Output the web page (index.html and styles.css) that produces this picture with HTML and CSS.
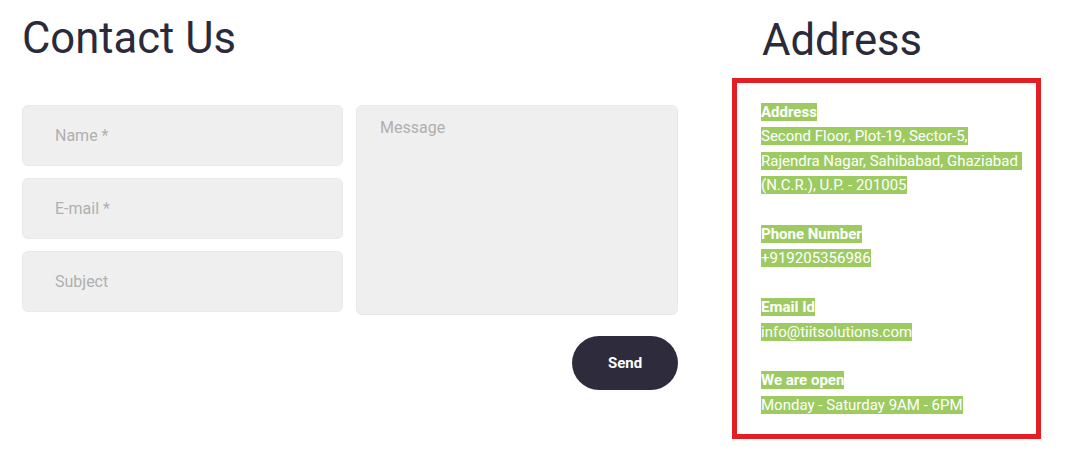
FILE: index.html
```html
<!DOCTYPE html>
<html lang="en">
<head>
  <meta charset="UTF-8" />
  <meta name="viewport" content="width=device-width, initial-scale=1.0" />
  <title>Contact Us</title>
  <link rel="stylesheet" href="styles.css">
</head>
<body>
  <div class="page">
    <section class="contact">
      <h1>Contact Us</h1>
      <form class="contact-form" onsubmit="return false">
        <div class="fields">
          <input type="text" placeholder="Name *" />
          <input type="email" placeholder="E-mail *" />
          <input type="text" placeholder="Subject" />
        </div>
        <textarea placeholder="Message"></textarea>
        <div class="actions">
          <button type="submit">Send</button>
        </div>
      </form>
    </section>

    <aside class="address">
      <h2>Address</h2>
      <div class="address-box">
        <p><span class="hl"><b>Address</b></span><br>
          <span class="hl">Second Floor, Plot-19, Sector-5,</span><br>
          <span class="hl">Rajendra Nagar, Sahibabad, Ghaziabad&nbsp;</span><br>
          <span class="hl">(N.C.R.), U.P. - 201005</span></p>
        <p><span class="hl"><b>Phone Number</b></span><br>
          <span class="hl">+919205356986</span></p>
        <p><span class="hl"><b>Email Id</b></span><br>
          <span class="hl">info@tiitsolutions.com</span></p>
        <p><span class="hl"><b>We are open</b></span><br>
          <span class="hl">Monday - Saturday 9AM - 6PM</span></p>
      </div>
    </aside>
  </div>
</body>
</html>
```

FILE: styles.css
```css
body {
  margin: 0;
  background: #fff;
  color: #2b2a3a;
  font-family: Roboto, 'Liberation Sans', sans-serif;
}
.page {
  display: flex;
  gap: 54px;
  padding: 0 22px;
}
.contact {
  width: 656px;
}
h1, h2 {
  font-weight: 400;
  font-size: 43.6px;
  line-height: 52px;
  margin: 13px 0 0;
  color: #2b2a3a;
}
h2 {
  margin: 15px 0 0 30px;
}
.contact-form {
  margin-top: 40px;
  display: grid;
  grid-template-columns: 321px 322px;
  column-gap: 13px;
}
.fields {
  display: flex;
  flex-direction: column;
  gap: 12px;
}
input, textarea {
  box-sizing: border-box;
  background: #efefef;
  border: 1px solid #e9e9e9;
  border-radius: 6px;
  font-family: Roboto, 'Liberation Sans', sans-serif;
  font-size: 16px;
  color: #333;
  outline: none;
}
input {
  height: 61px;
  padding: 0 32px;
}
textarea {
  height: 210px;
  padding: 12px 23px;
  resize: none;
}
::placeholder {
  color: #b0b0b0;
}
.actions {
  grid-column: 2;
  display: flex;
  justify-content: flex-end;
  margin-top: 21px;
}
button {
  width: 106px;
  height: 54px;
  border: none;
  border-radius: 27px;
  background: #2e2c3c;
  color: #fff;
  font-family: Roboto, 'Liberation Sans', sans-serif;
  font-weight: 700;
  font-size: 15px;
  cursor: pointer;
}
.address {
  width: 309px;
}
.address-box {
  margin-top: 11px;
  border: 5px solid #e31e25;
  padding: 17px 10px 17px 24px;
  width: 309px;
  box-sizing: border-box;
  white-space: nowrap;
}
.address-box p {
  margin: 0 0 24.4px;
  font-size: 15px;
  line-height: 24.4px;
}
.address-box p:last-child {
  margin-bottom: 0;
}
.hl {
  background: #9dcb62;
  color: #fff;
}
```
